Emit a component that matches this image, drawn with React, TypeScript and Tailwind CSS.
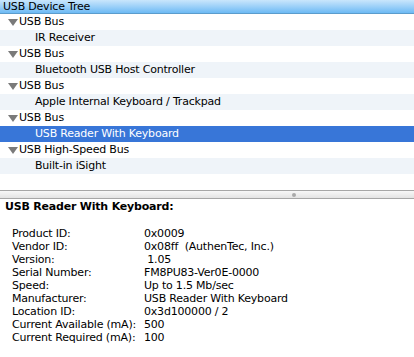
import React from 'react';

type Node = { label: string; children: string[] };

const tree: Node[] = [
  { label: 'USB Bus', children: ['IR Receiver'] },
  { label: 'USB Bus', children: ['Bluetooth USB Host Controller'] },
  { label: 'USB Bus', children: ['Apple Internal Keyboard / Trackpad'] },
  { label: 'USB Bus', children: ['USB Reader With Keyboard'] },
  { label: 'USB High-Speed Bus', children: ['Built-in iSight'] },
];

const selected = 'USB Reader With Keyboard';

const details: [string, string][] = [
  ['Product ID:', '0x0009'],
  ['Vendor ID:', '0x08ff  (AuthenTec, Inc.)'],
  ['Version:', ' 1.05'],
  ['Serial Number:', 'FM8PU83-Ver0E-0000'],
  ['Speed:', 'Up to 1.5 Mb/sec'],
  ['Manufacturer:', 'USB Reader With Keyboard'],
  ['Location ID:', '0x3d100000 / 2'],
  ['Current Available (mA):', '500'],
  ['Current Required (mA):', '100'],
];

const Disclosure = () => (
  <svg width="10" height="7" viewBox="0 0 10 7" className="mr-[1px] shrink-0" aria-hidden>
    <path d="M0 0h10L5 7z" fill="#7a7a7a" />
  </svg>
);

export default function App() {
  const rows: { text: string; parent: boolean }[] = [];
  tree.forEach((n) => {
    rows.push({ text: n.label, parent: true });
    n.children.forEach((c) => rows.push({ text: c, parent: false }));
  });
  rows.push({ text: '', parent: false });

  return (
    <div className="w-[414px] h-[357px] overflow-hidden bg-white text-[11px] tracking-[-0.2px] text-black font-['DejaVu_Sans',sans-serif]">
      <div className="h-[14px] border-b border-[#5b9ccc] bg-gradient-to-b from-[#c9e6fc] to-[#6cbaf4] pl-[3px] leading-[13px]">
        USB Device Tree
      </div>
      <div className="flex flex-col">
        {rows.map((r, i) => {
          const isSel = r.text === selected;
          const bg = isSel ? 'bg-[#3876d8] text-white' : i % 2 === 1 ? 'bg-[#eff4f9]' : 'bg-white';
          return (
            <div key={i} className={`h-[16px] flex items-center ${bg}`}>
              {r.parent ? (
                <div className="flex items-center pl-[8px]">
                  <Disclosure />
                  <span>{r.text}</span>
                </div>
              ) : (
                <span className="pl-[35px]">{r.text}</span>
              )}
            </div>
          );
        })}
      </div>
      <div className="h-[9px] border-y border-[#a6a6a6] bg-gradient-to-b from-[#f7f7f7] to-[#e3e3e3] flex justify-end pr-[118px] items-center">
        <span className="w-[4px] h-[4px] rounded-full bg-[#a9a9a9]" />
      </div>
      <div className="pl-[5px] pt-[1px] font-bold leading-[13px]">USB Reader With Keyboard:</div>
      <div className="mt-[14px] flex flex-col leading-[13px]">
        {details.map(([k, v]) => (
          <div key={k} className="flex">
            <span className="w-[144px] pl-[12px] shrink-0">{k}</span>
            <span className="whitespace-pre">{v}</span>
          </div>
        ))}
      </div>
    </div>
  );
}
